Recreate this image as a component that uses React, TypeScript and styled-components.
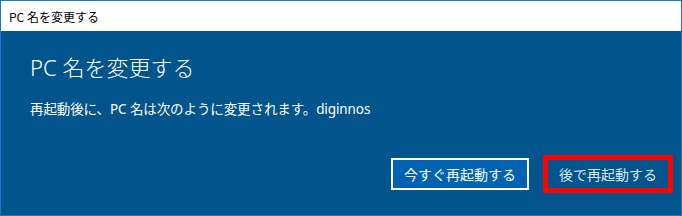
import styled, { createGlobalStyle } from "styled-components";

const GlobalStyle = createGlobalStyle`
  html, body {
    margin: 0;
    padding: 0;
    background: #ffffff;
  }
  body {
    font-family: "Noto Sans", "Noto Sans CJK JP", sans-serif;
  }
`;

const Window = styled.div`
  width: 682px;
  height: 216px;
  box-sizing: border-box;
  border: 1px solid #1a78c8;
  display: flex;
  flex-direction: column;
  background: #02548c;
`;

const TitleBar = styled.div`
  height: 30px;
  flex: none;
  background: #ffffff;
  display: flex;
  align-items: center;
  padding-left: 8px;
  font-size: 12px;
  color: #000000;
  font-family: "Noto Sans CJK JP", sans-serif;
`;

const Body = styled.div`
  flex: 1;
  display: flex;
  flex-direction: column;
  padding: 20px 8px 0 29px;
`;

const Heading = styled.h1`
  margin: 0;
  font-size: 22px;
  font-weight: 300;
  color: #ffffff;
  line-height: 32px;
  font-family: "Noto Sans", "Noto Sans CJK JP", sans-serif;
`;

const Message = styled.p`
  margin: 16px 0 0;
  font-size: 13.5px;
  letter-spacing: -0.1px;
  line-height: 20px;
  color: #ffffff;
  font-family: "Noto Sans", "Noto Sans CJK JP", sans-serif;
`;

const Footer = styled.div`
  display: flex;
  justify-content: flex-end;
  align-items: center;
  gap: 14px;
  margin-top: 36px;
`;

const Button = styled.button<{ $primary?: boolean }>`
  height: 32px;
  box-sizing: border-box;
  padding: 0;
  white-space: nowrap;
  font-size: 14px;
  font-family: "Noto Sans CJK JP", sans-serif;
  color: ${(p) => (p.$primary ? "#ffffff" : "#dce6ef")};
  background: ${(p) => (p.$primary ? "#0063b1" : "#02548c")};
  border: 2px solid ${(p) => (p.$primary ? "#ffffff" : "#02548c")};
  cursor: pointer;
`;

const RestartNowButton = styled(Button)`
  width: 138px;
`;

const Highlight = styled.div`
  border: 5px solid #ff0000;
  height: 38px;
  box-sizing: border-box;
  display: flex;
  align-items: center;
`;

const RestartLaterButton = styled(Button)`
  width: 120px;
  height: 28px;
  border: none;
`;

export default function App() {
  return (
    <>
      <GlobalStyle />
      <Window>
        <TitleBar>PC 名を変更する</TitleBar>
        <Body>
          <Heading>PC 名を変更する</Heading>
          <Message>再起動後に、PC 名は次のように変更されます。diginnos</Message>
          <Footer>
            <RestartNowButton $primary>今すぐ再起動する</RestartNowButton>
            <Highlight>
              <RestartLaterButton>後で再起動する</RestartLaterButton>
            </Highlight>
          </Footer>
        </Body>
      </Window>
    </>
  );
}
